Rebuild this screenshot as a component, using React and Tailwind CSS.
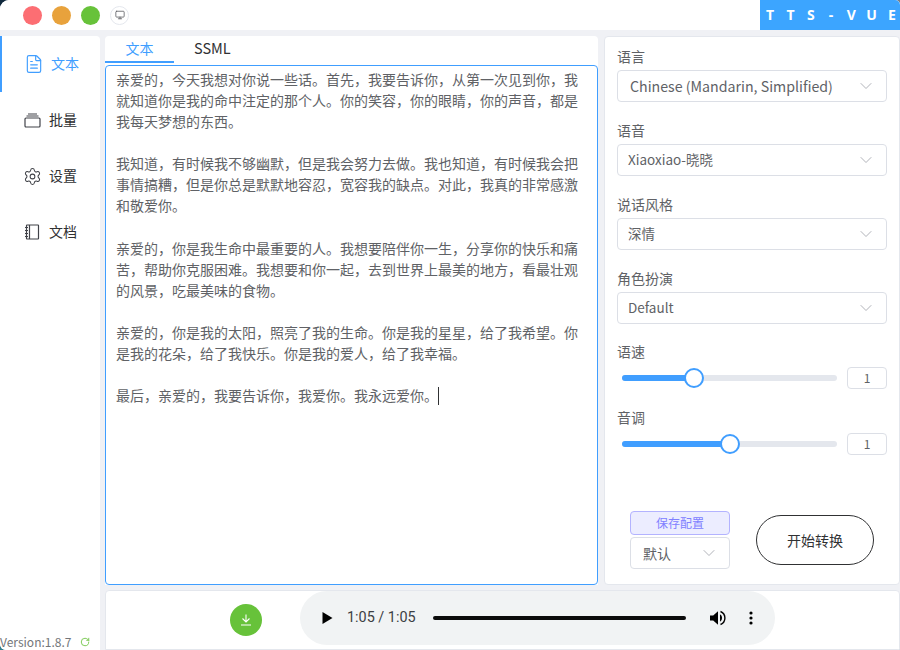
import { ChevronDown, FileText, Settings, Monitor, RotateCw } from "lucide-react";

const texto = `亲爱的，今天我想对你说一些话。首先，我要告诉你，从第一次见到你，我就知道你是我的命中注定的那个人。你的笑容，你的眼睛，你的声音，都是我每天梦想的东西。

我知道，有时候我不够幽默，但是我会努力去做。我也知道，有时候我会把事情搞糟，但是你总是默默地容忍，宽容我的缺点。对此，我真的非常感激和敬爱你。

亲爱的，你是我生命中最重要的人。我想要陪伴你一生，分享你的快乐和痛苦，帮助你克服困难。我想要和你一起，去到世界上最美的地方，看最壮观的风景，吃最美味的食物。

亲爱的，你是我的太阳，照亮了我的生命。你是我的星星，给了我希望。你是我的花朵，给了我快乐。你是我的爱人，给了我幸福。

最后，亲爱的，我要告诉你，我爱你。我永远爱你。`;

function BatchIcon() {
    return (
        <svg className="shrink-0" width="17" height="15" viewBox="0 0 17 15" fill="none" stroke="#404248" strokeWidth="1.2">
            <rect x="1" y="5" width="15" height="9" rx="1" />
            <path d="M2.5 3h12M4 1h9" />
        </svg>
    );
}

function NotebookIcon() {
    return (
        <svg className="shrink-0" width="16" height="16" viewBox="0 0 16 16" fill="none" stroke="#404248" strokeWidth="1.2">
            <rect x="2.5" y="1" width="12" height="14" rx="0.5" />
            <path d="M5.5 1v14M1 3.5h3M1 6.5h3M1 9.5h3M1 12.5h3" />
        </svg>
    );
}

function MenuItem({ icon, label, active }) {
    return (
        <div className={`flex h-14 items-center pl-[22px] text-sm ${active ? "border-l-2 border-[#409eff] text-[#409eff]" : "border-l-2 border-transparent text-[#303133]"}`}>
            <span className={`flex w-4 justify-center ${active ? "ml-[2px]" : ""}`}>{icon}</span>
            <span className="mb-[2px] ml-[9px]">{label}</span>
        </div>
    );
}

function SelectBox({ value, className = "" }) {
    return (
        <div className={`flex h-8 items-center justify-between rounded border border-[#dcdfe6] bg-white pr-[10px] text-[#606266] ${className}`}>
            <span>{value}</span>
            <ChevronDown size={20} strokeWidth={1.1} color="#a8abb2" />
        </div>
    );
}

function Campo({ label, value }) {
    return (
        <div className="mb-[19px]">
            <div className="mb-[5px] h-[18px] text-sm leading-[18px] text-[#606266]">{label}</div>
            <SelectBox value={value} className="pl-[10px] text-[13.5px]" />
        </div>
    );
}

function Deslizador({ label, percent }) {
    return (
        <div className="mb-[19px]">
            <div className="h-[18px] text-sm leading-[18px] text-[#606266]">{label}</div>
            <div className="mt-[7px] flex h-[22px] items-center">
                <div className="relative ml-[5px] h-[6px] w-[215px] rounded-full bg-[#e4e7ed]">
                    <div className="h-full rounded-full bg-[#409eff]" style={{ width: `${percent}%` }} />
                    <div className="absolute top-[-7px] ml-[-10px] size-5 rounded-full border-2 border-[#409eff] bg-white" style={{ left: `${percent}%` }} />
                </div>
                <div className="ml-[10px] flex h-[22px] w-10 items-center justify-center rounded border border-[#dcdfe6] text-xs text-[#606266]">1</div>
            </div>
        </div>
    );
}

function AudioPlayer() {
    return (
        <div className="flex h-[54px] w-[475px] items-center rounded-full bg-[#f1f3f4] pl-[22px] pr-[20px] font-['Roboto','Liberation_Sans',sans-serif] text-[#1f1f1f]">
            <svg width="11" height="12" viewBox="0 0 11 12" fill="#000"><path d="M0.5 0L10.5 6L0.5 12Z" /></svg>
            <span className="ml-[14px] text-[14.4px] text-[#3c4043]">1:05 / 1:05</span>
            <div className="ml-[17px] h-1 w-[253px] rounded-full bg-[#0b0b0b]" />
            <svg className="ml-[24px]" width="16" height="16" viewBox="0 0 16 16" fill="#000">
                <path d="M0 5.500h3.200L8 1.200v13.600L3.200 10.500H0Z" />
                <path d="M10 4.200a4.500 4.500 0 0 1 0 7.600Z" />
                <path d="M10.500 1.500a7 7 0 0 1 0 13" fill="none" stroke="#000" strokeWidth="1.400" />
            </svg>
            <svg className="ml-[23px]" width="4" height="14" viewBox="0 0 4 14" fill="#000">
                <circle cx="2" cy="2" r="1.600" /><circle cx="2" cy="7" r="1.600" /><circle cx="2" cy="12" r="1.600" />
            </svg>
        </div>
    );
}

export default function App() {
    return (
        <div className="h-[650px] w-[900px] bg-[conic-gradient(#7a8088_0_25%,#d6dde3_25%_50%,#2f7f8f_50%_75%,#10293d_75%)]">
            <div className="flex h-full flex-col overflow-hidden rounded-tl-[9px] rounded-tr-[5px] rounded-br-[3px] rounded-bl-[6px] bg-[#f0f1f5] font-['Noto_Sans_CJK_SC','Noto_Sans',sans-serif] text-sm">
                {/* Barra de titulo */}
                <div className="flex h-[30px] shrink-0 items-center bg-white">
                    <div className="ml-[23px] flex items-center gap-[10px]">
                        <span className="size-[19px] rounded-full bg-[#fc6e73]" />
                        <span className="size-[19px] rounded-full bg-[#e8a23c]" />
                        <span className="size-[19px] rounded-full bg-[#67c23a]" />
                        <span className="flex size-[19px] items-center justify-center rounded-full border border-[#e4e7ed]">
                            <Monitor size={10} color="#606266" />
                        </span>
                    </div>
                    <div className="ml-auto flex h-[30px] w-[140px] items-center bg-[#3ca5ff] font-['Noto_Sans',sans-serif] text-sm font-bold text-white">
                        {["T", "T", "S", "-", "V", "U", "E"].map((letra, i) => (
                            <span key={i} className="w-[20.3px] shrink-0 text-center">{letra}</span>
                        ))}
                    </div>
                </div>

                <div className="flex min-h-0 flex-1 pt-[6px]">
                    {/* Menu lateral */}
                    <div className="relative w-[100px] shrink-0 rounded-tr bg-white">
                        <MenuItem active icon={<FileText className="shrink-0" size={20} strokeWidth={1.4} />} label="文本" />
                        <MenuItem icon={<BatchIcon />} label="批量" />
                        <MenuItem icon={<Settings className="shrink-0" size={19} strokeWidth={1.3} color="#404248" />} label="设置" />
                        <MenuItem icon={<NotebookIcon />} label="文档" />
                        <div className="absolute bottom-0 left-0 flex h-[16px] items-center text-xs leading-none text-[#73767a]">
                            <span>Version:1.8.7</span>
                            <RotateCw className="ml-[9px]" size={10} color="#67c23a" />
                        </div>
                    </div>

                    <div className="ml-[5px] flex min-w-0 flex-1 flex-col">
                        <div className="flex h-[549px] gap-[6px]">
                            {/* Editor */}
                            <div className="flex w-[493px] flex-col rounded-t bg-white">
                                <div className="flex h-[27px] shrink-0 text-sm">
                                    <div className="h-[27px] w-[69px] border-b-2 border-[#409eff] text-center leading-[24px] text-[#409eff]">文本</div>
                                    <div className="ml-[20px] text-[14.5px] leading-[24px] text-[#303133]">SSML</div>
                                </div>
                                <div className="mt-[2px] flex-1 rounded border border-[#409eff] bg-white px-[10px] py-[3px] text-sm leading-[21.07px] whitespace-pre-wrap text-[#606266]">
                                    <div className="w-[470px]">
                                        {texto}
                                        <span className="inline-block h-[18px] w-px bg-[#303133] align-[-4px]" />
                                    </div>
                                </div>
                            </div>

                            {/* Panel de opciones */}
                            <div className="flex flex-1 flex-col rounded border border-[#e4e7ed] bg-white px-[12px] pt-[10px]">
                                <Campo label="语言" value={<span className="ml-[2px] text-[14.2px]">Chinese (Mandarin, Simplified)</span>} />
                                <Campo label="语音" value="Xiaoxiao-晓晓" />
                                <Campo label="说话风格" value="深情" />
                                <Campo label="角色扮演" value="Default" />
                                <div className="mt-[-1px]">
                                    <Deslizador label="语速" percent={33.500} />
                                    <Deslizador label="音调" percent={50} />
                                </div>
                                <div className="mt-[37px] flex">
                                    <div className="ml-[13px] w-[100px]">
                                        <div className="h-6 rounded border border-[#b3b3ff] bg-[#ecedff] text-center text-xs leading-[22px] text-[#8080ff]">保存配置</div>
                                        <SelectBox value="默认" className="mt-[2px] pl-[12px] text-sm" />
                                    </div>
                                    <div className="mt-[4px] ml-[26px] flex h-[50px] w-[118px] items-center justify-center rounded-full border border-[#303133] bg-white text-sm text-[#303133]">开始转换</div>
                                </div>
                            </div>
                        </div>

                        {/* Reproductor */}
                        <div className="mt-[5px] flex flex-1 items-start rounded-t border border-[#e4e7ed] bg-white pl-[124px]">
                            <div className="mt-[13px] flex size-8 items-center justify-center rounded-full bg-[#67c23a]">
                                <svg width="12" height="12" viewBox="0 0 12 12" fill="none" stroke="#ffffff" strokeWidth="1.1">
                                    <path d="M6 0.500V7.500M2.500 4.500L6 8L9.500 4.500M1 11H11" />
                                </svg>
                            </div>
                            <div className="ml-[38px]"><AudioPlayer /></div>
                        </div>
                    </div>
                </div>
            </div>
        </div>
    );
}
